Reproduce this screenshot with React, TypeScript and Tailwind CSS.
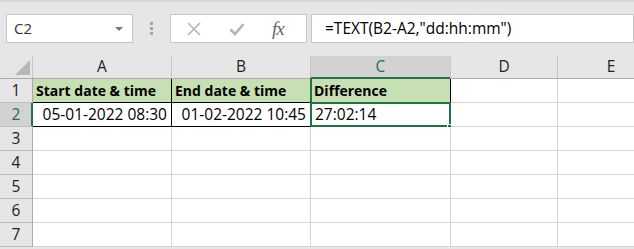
import React from 'react';

const font = { fontFamily: '"Open Sans", "Liberation Sans", sans-serif' };

const cols = ['A', 'B', 'C', 'D', 'E'];
const colW = ['w-[139px]', 'w-[139px]', 'w-[140px]', 'w-[107px]', 'w-[107px]'];

const XIcon = () => (
    <svg width="16" height="16" viewBox="0 0 16 16">
        <path d="M2 2 L14 14 M14 2 L2 14" stroke="#b4b4b4" strokeWidth="1.6" fill="none" />
    </svg>
);

const CheckIcon = () => (
    <svg width="16" height="16" viewBox="0 0 16 16">
        <path d="M1.5 8.5 L6 13 L14.5 3" stroke="#b4b4b4" strokeWidth="2.6" fill="none" />
    </svg>
);

export default function App() {
    const rows = [1, 2, 3, 4, 5, 6, 7];

    const cell = (r: number, c: number) => {
        const black = r <= 2 && c <= 2;
        const base = `relative h-[24px] shrink-0 border-b border-r ${colW[c]} ${black ? 'border-black' : 'border-[#d4d4d4]'}`;
        if (r === 1 && c <= 2) {
            const text = ['Start date & time', 'End date & time', 'Difference'][c];
            return (
                <div key={c} className={`${base} bg-[#c6e0b4] flex items-center pl-[3px] text-[14px] font-bold text-black`}>
                    {c === 2 && <div className="absolute left-[-1px] top-[-1px] bottom-[-1px] w-[2px] bg-[#217346]" />}
                    <span className="leading-none">{text}</span>
                </div>
            );
        }
        if (r === 2 && c <= 1) {
            const text = ['05-01-2022 08:30', '01-02-2022 10:45'][c];
            return (
                <div key={c} className={`${base} bg-white flex items-center justify-end pr-[4px] text-[15.5px] text-black`}>
                    <span className="leading-none">{text}</span>
                </div>
            );
        }
        if (r === 2 && c === 2) {
            return (
                <div key={c} className={`${base} bg-white flex items-center pl-[4px] text-[15.5px] text-black`}>
                    <span className="leading-none">27:02:14</span>
                    <div className="absolute left-[-1px] top-[-1px] right-[-1px] bottom-[-1px] border-2 border-[#217346]" />
                    <div className="absolute right-[-3px] bottom-[-4px] w-[6px] h-[6px] bg-[#217346] border border-white" />
                </div>
            );
        }
        return <div key={c} className={`${base} bg-white`} />;
    };

    return (
        <div className="w-[634px] h-[249px] overflow-hidden bg-[#e6e6e6] flex flex-col" style={font}>
            {/* toolbar */}
            <div className="h-[56px] shrink-0 border-t-2 border-[#d6d6d6] pt-[12px] flex items-start">
                <div className="ml-[6px] w-[127px] h-[29px] bg-white border border-[#c6c6c6] flex items-center justify-between pl-[7px] pr-[9px]">
                    <span className="text-[15px] text-[#333] leading-none">C2</span>
                    <div className="w-0 h-0 border-l-[4px] border-r-[4px] border-t-[4px] border-l-transparent border-r-transparent border-t-[#777]" />
                </div>
                <div className="w-[37px] h-[29px] flex flex-col items-center justify-center gap-[2px]">
                    <div className="w-[3px] h-[3px] bg-[#a6a6a6]" />
                    <div className="w-[3px] h-[3px] bg-[#a6a6a6]" />
                    <div className="w-[3px] h-[3px] bg-[#a6a6a6]" />
                </div>
                <div className="w-[137px] h-[29px] bg-white border border-[#c6c6c6] flex items-center">
                    <div className="ml-[15px]"><XIcon /></div>
                    <div className="ml-[27px]"><CheckIcon /></div>
                    <span className="ml-[27px] text-[19px] italic text-[#666] leading-none tracking-[-1px]" style={{ fontFamily: '"Liberation Serif", serif' }}>fx</span>
                </div>
                <div className="ml-[4px] flex-1 h-[29px] bg-white border border-[#c6c6c6] flex items-center pl-[13px]">
                    <span className="text-[15.5px] text-black leading-none">=TEXT(B2-A2,"dd:hh:mm")</span>
                </div>
            </div>

            {/* column headers */}
            <div className="h-[23px] shrink-0 flex border-b border-[#ababab]">
                <div className="w-[33px] shrink-0 border-r border-[#c6c6c6] relative">
                    <svg className="absolute right-[2px] bottom-[3px]" width="15" height="15" viewBox="0 0 15 15">
                        <path d="M15 0 L15 15 L0 15 Z" fill="#b7b7b7" />
                    </svg>
                </div>
                {cols.map((c, i) => (
                    <div
                        key={c}
                        className={`${colW[i]} shrink-0 border-r border-[#c6c6c6] flex items-center justify-center text-[15.5px] leading-none relative ${i === 2 ? 'bg-[#d2d2d2] text-[#217346]' : 'text-[#222]'}`}
                    >
                        {c}
                        {i === 2 && <div className="absolute left-0 right-0 bottom-[-1px] h-[2px] bg-[#217346]" />}
                    </div>
                ))}
            </div>

            {/* rows */}
            {rows.map((r) => (
                <div key={r} className="flex shrink-0">
                    <div
                        className={`w-[33px] h-[24px] shrink-0 border-b border-r flex items-center justify-center text-[15.5px] leading-none relative ${r === 2 ? 'bg-[#d2d2d2] text-[#217346] border-b-[#bdbdbd] border-r-[#217346]' : 'text-[#222] border-b-[#bdbdbd] border-r-[#ababab]'}`}
                    >
                        {r}
                        {r === 2 && <div className="absolute top-0 bottom-0 right-[-1px] w-[2px] bg-[#217346]" />}
                    </div>
                    {cols.map((_, c) => cell(r, c))}
                </div>
            ))}
        </div>
    );
}
